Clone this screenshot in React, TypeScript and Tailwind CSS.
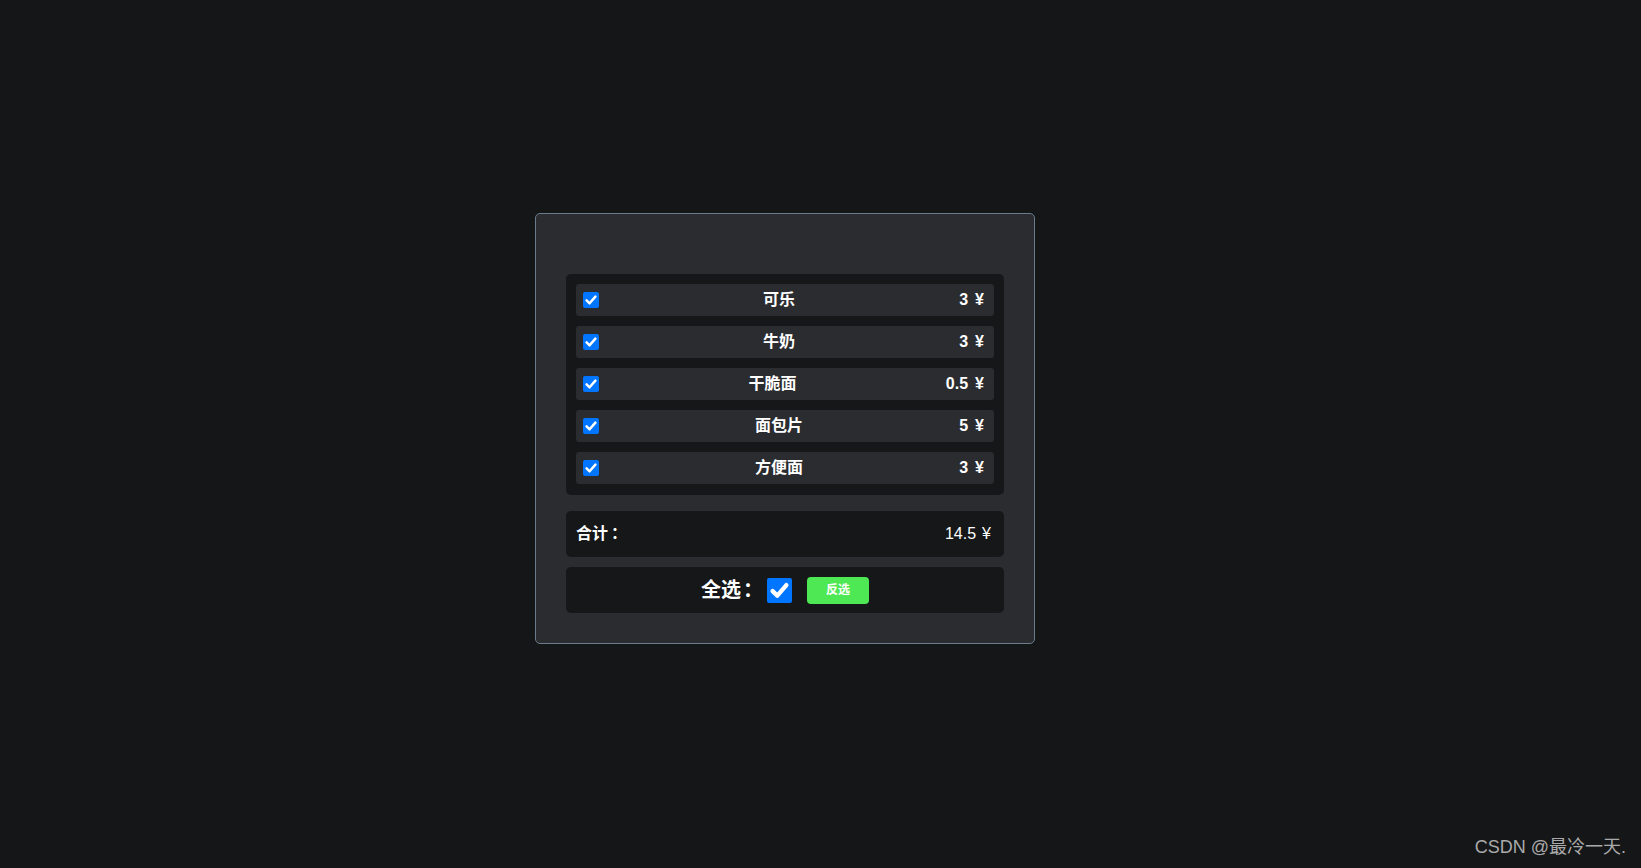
import { useMemo, useState } from 'react'

type Item = { id: number; name: string; price: number; checked: boolean }

const initialItems: Item[] = [
  { id: 1, name: '可乐', price: 3, checked: true },
  { id: 2, name: '牛奶', price: 3, checked: true },
  { id: 3, name: '干脆面', price: 0.5, checked: true },
  { id: 4, name: '面包片', price: 5, checked: true },
  { id: 5, name: '方便面', price: 3, checked: true },
]

function CheckBox({ checked, big, onClick }: { checked: boolean; big?: boolean; onClick: () => void }) {
  const size = big ? 'h-[25px] w-[25px] rounded-[2px]' : 'h-4 w-4 rounded-[2px]'
  return (
    <button
      type="button"
      onClick={onClick}
      className={`${size} flex shrink-0 items-center justify-center ${
        checked ? 'bg-[#0075ff]' : 'border border-[#767676] bg-white'
      }`}
    >
      {checked ? (
        <svg viewBox="0 0 16 16" className="h-full w-full">
          <path
            d="M3.6 8.4 L6.6 11.3 L12.4 4.6"
            fill="none"
            stroke="white"
            strokeWidth={big ? 2.8 : 2.5}
            strokeLinecap="round"
            strokeLinejoin="round"
          />
        </svg>
      ) : null}
    </button>
  )
}

export default function App() {
  const [items, setItems] = useState<Item[]>(initialItems)

  const total = useMemo(() => items.filter((i) => i.checked).reduce((s, i) => s + i.price, 0), [items])
  const allChecked = items.every((i) => i.checked)

  const toggle = (id: number) => setItems((list) => list.map((i) => (i.id === id ? { ...i, checked: !i.checked } : i)))
  const toggleAll = () => setItems((list) => list.map((i) => ({ ...i, checked: !allChecked })))
  const invert = () => setItems((list) => list.map((i) => ({ ...i, checked: !i.checked })))

  return (
    <div
      className="relative min-h-[868px] w-full bg-[#151618] pl-[535px] pt-[213px] text-white"
      style={{ fontFamily: '"Liberation Sans", "Noto Sans CJK SC", sans-serif' }}
    >
      <div className="w-[500px] rounded-[5px] border border-[#6a7c8c] bg-[#2b2c2f] px-[30px] pb-[30px] pt-[60px]">
        <div className="flex flex-col gap-[10px] rounded-[5px] bg-[#161719] px-[10px] pb-[11px] pt-[10px]">
          {items.map((item) => (
            <div
              key={item.id}
              className="flex h-[32px] items-center justify-between rounded-[3px] bg-[#2b2c2f] pl-[7px] pr-[10px] text-[16px] font-bold"
            >
              <CheckBox checked={item.checked} onClick={() => toggle(item.id)} />
              <span>{item.name}</span>
              <span>
                {item.price}
                <span className="ml-[7px]">¥</span>
              </span>
            </div>
          ))}
        </div>

        <div className="mt-[16px] flex h-[46px] items-center justify-between rounded-[5px] bg-[#161719] pl-[10px] pr-[13px] text-[16px]">
          <span className="font-bold">
            合计<span className="ml-[3px]">：</span>
          </span>
          <span>
            {total}
            <span className="ml-[6px]">¥</span>
          </span>
        </div>

        <div className="mt-[10px] flex h-[46px] items-center justify-center rounded-[5px] bg-[#161719]">
          <span className="text-[20px] font-bold">
            全选<span className="ml-[2px]">：</span>
          </span>
          <span className="ml-[4px]">
            <CheckBox checked={allChecked} big onClick={toggleAll} />
          </span>
          <button
            type="button"
            onClick={invert}
            className="ml-[15px] h-[27px] w-[62px] rounded-[4px] bg-[#4fe855] text-[12px] font-bold text-white"
          >
            反选
          </button>
        </div>
      </div>

      <div className="absolute bottom-[7px] right-[15px] text-[18px] text-[#aaaaaa]">CSDN @最冷一天.</div>
    </div>
  )
}
